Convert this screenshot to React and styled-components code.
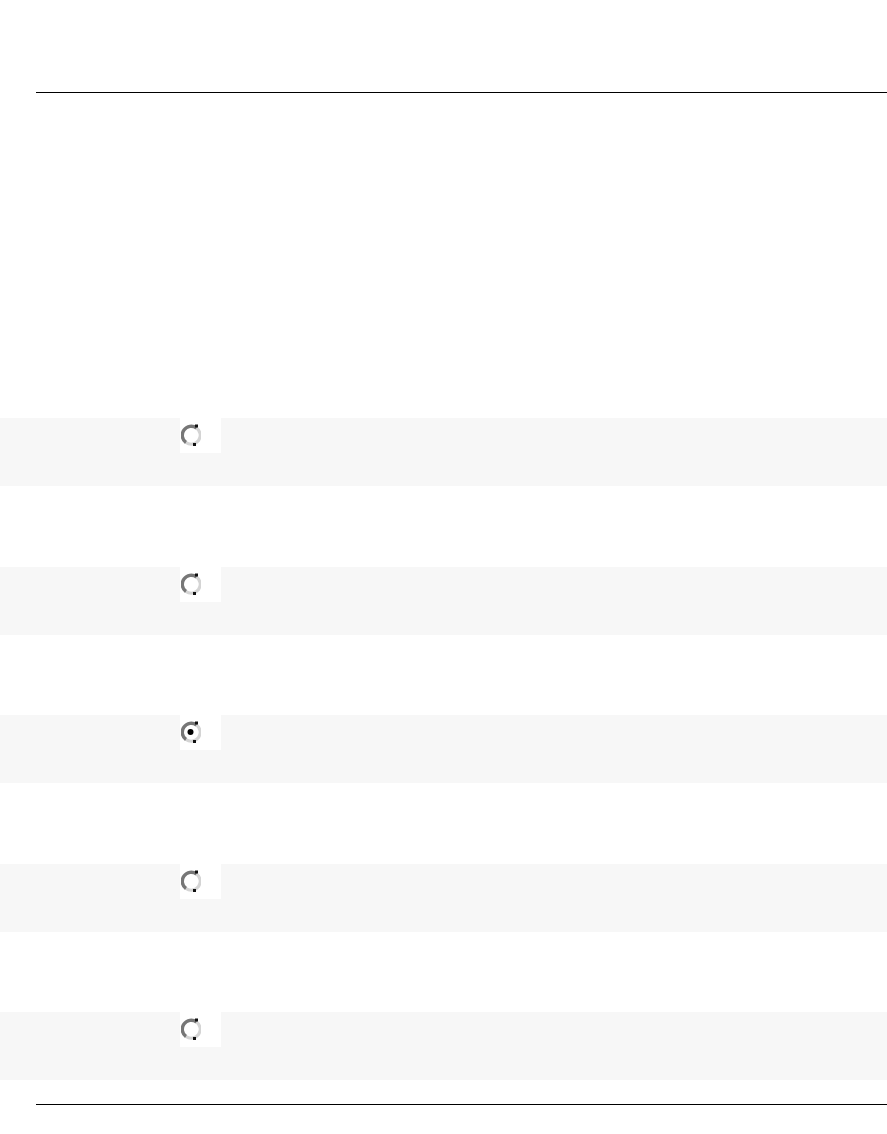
import styled, { createGlobalStyle } from 'styled-components'

const Global = createGlobalStyle`
  html, body {
    margin: 0;
    padding: 0;
    background: #ffffff;
    font-family: "Liberation Sans", Arial, sans-serif;
  }
`

const Page = styled.div`
  width: 887px;
  min-height: 1134px;
  display: flex;
  flex-direction: column;
`

const Rule = styled.div`
  height: 1px;
  background: #000;
  margin-left: 36px;
  margin-top: ${p => p.$top}px;
`

const List = styled.div`
  display: flex;
  flex-direction: column;
  gap: 80.5px;
  margin-top: 325px;
`

const Row = styled.div`
  height: 68px;
  background: #f7f7f7;
  padding-left: 180px;
  display: flex;
  align-items: flex-start;
`

const Cell = styled.div`
  width: 41px;
  height: 35px;
  background: #fff;
  display: flex;
  padding: 5px 0 0 1px;
  box-sizing: border-box;
`

const RadioBox = styled.svg`
  width: 20px;
  height: 24px;
  display: block;
`

function Radio({ checked }) {
  return (
    <RadioBox viewBox="0 0 20 24">
      <path d="M5 19.5 A8 8 0 0 0 15.5 5" fill="none" stroke="#d4d4d4" strokeWidth="3" />
      <path d="M15.5 5 A8 8 0 0 0 5 19.5" fill="none" stroke="#777" strokeWidth="3.4" />
      <rect x="14" y="1.5" width="3" height="3" fill="#111" />
      <rect x="12" y="20" width="3" height="3" fill="#111" />
      {checked && <circle cx="9.5" cy="12" r="3" fill="#000" />}
    </RadioBox>
  )
}

const rows = [false, false, true, false, false]

export default function App() {
  return (
    <Page>
      <Global />
      <Rule $top={92} />
      <List>
        {rows.map((c, i) => (
          <Row key={i}>
            <Cell>
              <Radio checked={c} />
            </Cell>
          </Row>
        ))}
      </List>
      <Rule $top={24} />
    </Page>
  )
}
